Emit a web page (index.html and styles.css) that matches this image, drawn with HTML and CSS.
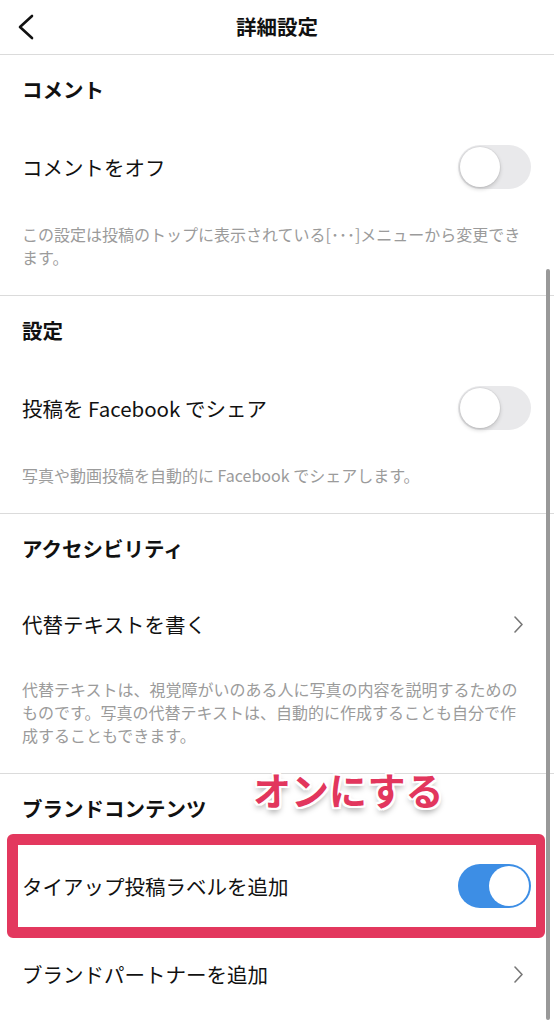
FILE: index.html
```html
<!DOCTYPE html>
<html lang="ja">
<head>
  <meta charset="UTF-8" />
  <title>詳細設定</title>
  <meta name="viewport" content="width=device-width, initial-scale=1.0" />
  <link rel="stylesheet" href="styles.css">
</head>
<body>

<!-- Barra superior -->
<header class="topbar">
  <button class="back" aria-label="戻る">
    <svg width="18" height="26" viewBox="0 0 18 26">
      <polyline points="15,2 3,13 15,24" fill="none" stroke="#111" stroke-width="2.6" stroke-linecap="round" stroke-linejoin="round" />
    </svg>
  </button>
  <h1>詳細設定</h1>
  <span></span>
</header>

<main class="settings">
  <!-- Comentarios -->
  <section class="group">
    <h2>コメント</h2>
    <div class="row">
      <span>コメントをオフ</span>
      <span class="switch"></span>
    </div>
    <p class="note">この設定は投稿のトップに表示されている[･･･]メニューから変更できます。</p>
  </section>

  <section class="group">
    <h2>設定</h2>
    <div class="row">
      <span>投稿を Facebook でシェア</span>
      <span class="switch"></span>
    </div>
    <p class="note">写真や動画投稿を自動的に Facebook でシェアします。</p>
  </section>

  <section class="group">
    <h2>アクセシビリティ</h2>
    <div class="row row-link">
      <span>代替テキストを書く</span>
      <svg class="chevron" width="9" height="17" viewBox="0 0 9 17">
        <polyline points="1,1 8,8.5 1,16" fill="none" stroke="#777" stroke-width="1.6" stroke-linecap="round" stroke-linejoin="round" />
      </svg>
    </div>
    <p class="note">代替テキストは、視覚障がいのある人に写真の内容を説明するためのものです。写真の代替テキストは、自動的に作成することも自分で作成することもできます。</p>
  </section>

  <section class="group group-last">
    <div class="callout">オンにする</div>
    <h2>ブランドコンテンツ</h2>
    <div class="row highlight">
      <span>タイアップ投稿ラベルを追加</span>
      <span class="switch on"></span>
    </div>
    <div class="row">
      <span>ブランドパートナーを追加</span>
      <svg class="chevron" width="9" height="17" viewBox="0 0 9 17">
        <polyline points="1,1 8,8.5 1,16" fill="none" stroke="#777" stroke-width="1.6" stroke-linecap="round" stroke-linejoin="round" />
      </svg>
    </div>
  </section>
</main>

<div class="scrollbar"></div>

</body>
</html>
```

FILE: styles.css
```css
body {
  margin: 0;
  background: white;
  color: #111;
  font-family: 'Noto Sans CJK JP', 'Noto Sans', sans-serif;
  position: relative;
  height: 1020px;
  overflow: hidden;
}

.topbar {
  height: 54px;
  border-bottom: 1px solid #dbdbdb;
  display: grid;
  grid-template-columns: 1fr auto 1fr;
  align-items: center;
}

.back {
  background: none;
  border: none;
  padding: 0 0 0 17px;
  display: flex;
  align-items: center;
  justify-self: start;
  margin-top: -1px;
}

.topbar h1 {
  margin: 0 0 3px;
  font-size: 20.5px;
  font-weight: bold;
}

.group {
  border-bottom: 1px solid #dbdbdb;
}

.group-last {
  border-bottom: none;
  position: relative;
}

.group h2 {
  margin: 0;
  height: 68px;
  display: flex;
  align-items: center;
  padding-left: 22px;
  font-size: 20.5px;
  font-weight: bold;
}

.row {
  height: 88px;
  display: flex;
  align-items: center;
  justify-content: space-between;
  padding: 0 23px 0 22px;
  font-size: 20.5px;
  position: relative;
}

.row-link {
  height: 84px;
}

.chevron {
  margin-right: 8px;
}

.note {
  margin: 0;
  padding: 12px 30px 26px 22px;
  font-size: 16px;
  line-height: 23px;
  color: #9b9b9b;
}

/* interruptores */
.switch {
  width: 73px;
  height: 44px;
  border-radius: 22px;
  background: #e9e9eb;
  position: relative;
  flex-shrink: 0;
}

.switch::after {
  content: "";
  position: absolute;
  top: 2px;
  left: 2px;
  width: 40px;
  height: 40px;
  border-radius: 50%;
  background: white;
  box-shadow: 0 2px 4px rgba(0,0,0,0.18), 0 0 0 1px rgba(0,0,0,0.04);
}

.switch.on {
  background: #3d8ee5;
}

.switch.on::after {
  left: auto;
  right: 2px;
  box-shadow: 0 0 0 1px #3d8ee5;
}

/* anotaciones */
.highlight::after {
  content: "";
  position: absolute;
  top: -8px;
  bottom: -8px;
  left: 7px;
  right: 9px;
  border: 11px solid #e3385e;
  border-right-width: 9px;
  border-radius: 6px;
}

.callout {
  position: absolute;
  top: -4px;
  left: 253px;
  font-size: 38px;
  line-height: 1;
  font-weight: bold;
  color: #e2365d;
  z-index: 2;
  text-shadow:
    2px 0 0 white, -2px 0 0 white, 0 2px 0 white, 0 -2px 0 white,
    2px 2px 0 white, -2px 2px 0 white, 2px -2px 0 white, -2px -2px 0 white,
    0 4px 6px rgba(0,0,0,0.4);
}

.scrollbar {
  position: absolute;
  top: 269px;
  right: 4px;
  bottom: 0;
  width: 4.5px;
  border-radius: 2px;
  background: #999;
}
```
